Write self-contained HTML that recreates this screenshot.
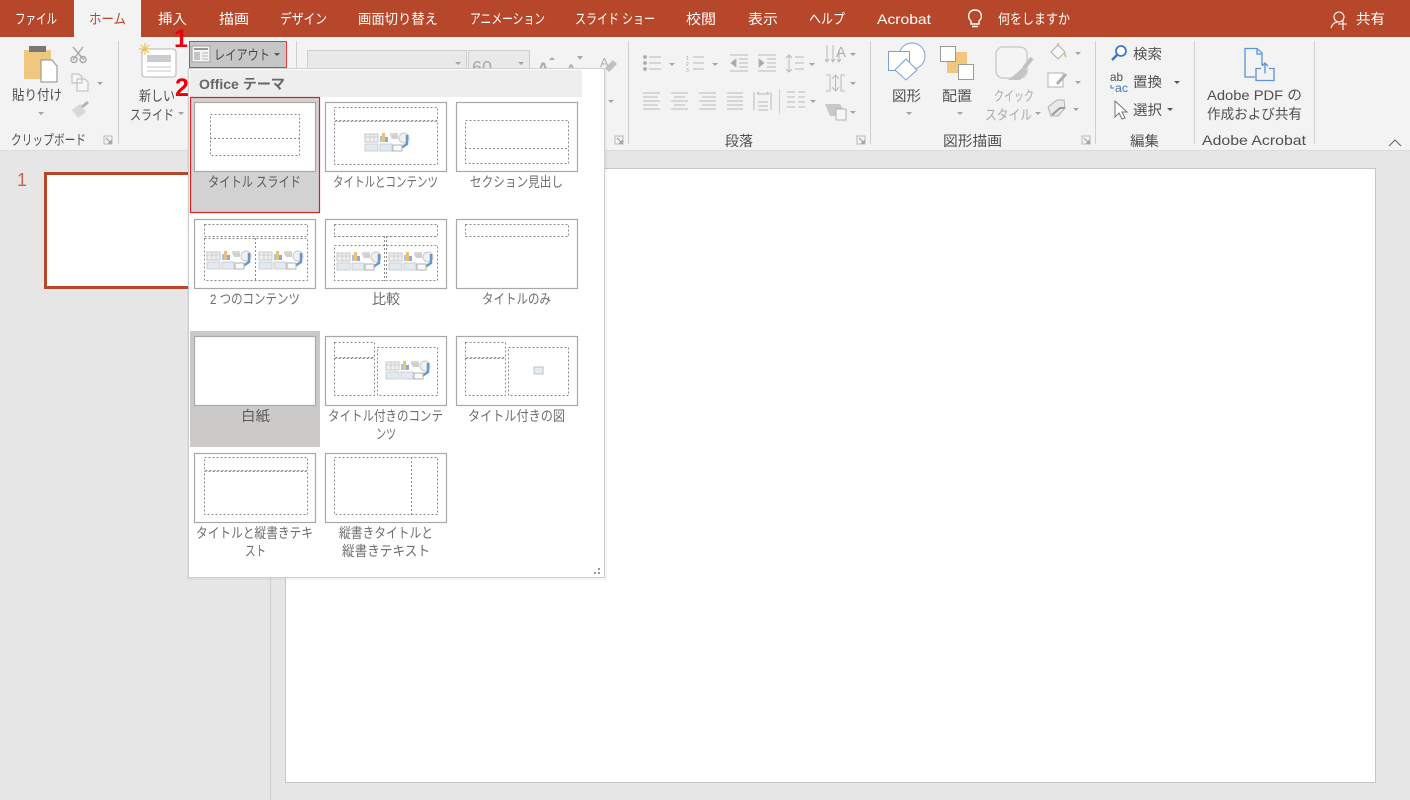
<!DOCTYPE html>
<html lang="ja"><head><meta charset="utf-8"><title>PowerPoint</title>
<style>
html,body{margin:0;padding:0;width:1410px;height:800px;overflow:hidden;background:#e6e6e6}
svg{display:block;position:absolute;left:0;top:0}
text{font-family:"Liberation Sans","Noto Sans CJK JP",sans-serif;font-size:14px;fill:#505050}
.tab text{fill:#fff;font-size:14px}
.lbl text{fill:#6e6e6e;font-size:14px}
.dim text{fill:#ababab}
.ic{fill:none;stroke:#b8b8b8;stroke-width:1}
.ph{fill:none;stroke:#8c8c8c;stroke-width:1;stroke-dasharray:2 2}
.th{fill:#fff;stroke:#a8a8a8;stroke-width:1.200}
.sep{stroke:#d0d0d0;stroke-width:1}
</style></head><body>
<svg width="1410" height="800" viewBox="0 0 1410 800" xmlns="http://www.w3.org/2000/svg">
<defs>
<symbol id="ar" overflow="visible" viewBox="0 0 6 4" width="6" height="4"><path d="M0 0H6L3 3Z" fill="#a4a4a4"/></symbol>
<g id="cl" opacity=".85">
 <rect x="-21" y="-8" width="13" height="8" fill="#eee" stroke="#bebebe"/><path d="M-21 -5H-8M-16 -8V0M-12 -8V0" stroke="#c8c8c8"/>
 <rect x="-6" y="-6" width="2" height="6" fill="#9db7d6"/><rect x="-4" y="-9" width="3" height="9" fill="#e9b463"/><rect x="-1" y="-5" width="3" height="5" fill="#7f9dc0"/>
 <path d="M4 -7H12V-3H6Z" fill="#c8c8c8"/><path d="M4 -8H12" stroke="#a5a5a5"/>
 <circle cx="18" cy="-4" r="5" fill="#eee" stroke="#c0c0c0"/>
 <path d="M21 -7V2L15 6" fill="none" stroke="#4a86c8" stroke-width="2.500"/>
 <rect x="-21" y="2" width="13" height="7" fill="#dce6f0" stroke="#c8c8c8"/><rect x="-6" y="2" width="12" height="7" fill="#dce6f0" stroke="#c8c8c8"/><rect x="7" y="3" width="9" height="6" fill="#f8f8f8" stroke="#a5a5a5"/>
</g>
<g id="launch"><rect x="0" y="0" width="8" height="8" fill="none" stroke="#b8b8b8"/><path d="M2 2L7 7M7 4V7H4" fill="none" stroke="#999"/></g>
</defs>

<!-- Base -->
<rect width="1410" height="800" fill="#e6e6e6"/>
<rect width="1410" height="37" fill="#b7472a"/>
<rect x="0" y="37" width="1410" height="113" fill="#f3f3f3"/>
<rect x="0" y="150" width="1410" height="1" fill="#dcdcdc"/>
<rect x="74" y="0" width="67" height="38" fill="#f3f3f3"/>

<!-- Tabs -->
<g class="tab">
<text x="15" y="24" textLength="42" lengthAdjust="spacingAndGlyphs">ファイル</text>
<text x="89" y="24" textLength="37" lengthAdjust="spacingAndGlyphs" style="fill:#b7472a">ホーム</text>
<text x="158" y="24" textLength="29" lengthAdjust="spacingAndGlyphs">挿入</text>
<text x="219" y="24" textLength="30" lengthAdjust="spacingAndGlyphs">描画</text>
<text x="280" y="24" textLength="47" lengthAdjust="spacingAndGlyphs">デザイン</text>
<text x="358" y="24" textLength="80" lengthAdjust="spacingAndGlyphs">画面切り替え</text>
<text x="470" y="24" textLength="75" lengthAdjust="spacingAndGlyphs">アニメーション</text>
<text x="575" y="24" textLength="80" lengthAdjust="spacingAndGlyphs">スライド ショー</text>
<text x="686" y="24" textLength="30" lengthAdjust="spacingAndGlyphs">校閲</text>
<text x="748" y="24" textLength="30" lengthAdjust="spacingAndGlyphs">表示</text>
<text x="809" y="24" textLength="36" lengthAdjust="spacingAndGlyphs">ヘルプ</text>
<text x="877" y="24" textLength="54" lengthAdjust="spacingAndGlyphs">Acrobat</text>
<text x="998" y="24" textLength="72" lengthAdjust="spacingAndGlyphs">何をしますか</text>
<text x="1356" y="24" textLength="29" lengthAdjust="spacingAndGlyphs">共有</text>
</g>
<!-- Tell me bulb -->
<path d="M971 21C967 18 968 10 975 10C982 10 983 18 979 21V24H971ZM972 26.500H978" fill="none" stroke="#fff" stroke-width="1.400"/>
<!-- Share user -->
<circle cx="1339" cy="17" r="5" fill="none" stroke="#fff" stroke-width="1.100"/>
<path d="M1331 28C1332 24 1335 22 1338 22M1338 24H1347M1343 20V30" fill="none" stroke="#fff" stroke-width="1.100"/>

<!-- Group separators -->
<g class="sep"><path d="M118.500 41V144M296.500 41V144M628.500 41V144M870.500 41V144M1095.500 41V144M1194.500 41V144M1314.500 41V144"/></g>

<!-- Clipboard -->
<path d="M24 50H51V79H24Z" fill="#f0c77e"/>
<rect x="29" y="46" width="17" height="6" fill="#777"/>
<path d="M41 60H52L57 66V82H41Z" fill="#fff" stroke="#8e8e8e"/>
<text x="12" y="100" textLength="50" lengthAdjust="spacingAndGlyphs">貼り付け</text>
<use href="#ar" x="38" y="112"/>
<path d="M73 47L84 60M83 47L73 60" stroke="#a8a8a8" fill="none" stroke-width="1.400"/><circle cx="74" cy="59.500" r="3" fill="none" stroke="#a8a8a8" stroke-width="1.400"/><circle cx="83" cy="59.500" r="3" fill="none" stroke="#a8a8a8" stroke-width="1.400"/>
<path d="M72 74H79L82 77V83H72ZM77 79H85L88 82V91H77Z" fill="#f7f7f7" stroke="#bababa"/>
<use href="#ar" x="97" y="82"/>
<path d="M72 110L80 104L86 112L78 118Z" fill="#d8d8d8"/><path d="M82 107L88 102" stroke="#b4b4b4" stroke-width="3"/>
<text x="11" y="145" textLength="75" lengthAdjust="spacingAndGlyphs">クリップボード</text>
<use href="#launch" x="104" y="136"/>

<!-- New slide -->
<rect x="142" y="49" width="34" height="28" rx="3" fill="#fff" stroke="#b4b4b4"/>
<rect x="147" y="55" width="24" height="7" fill="#cccccc"/><path d="M147 67H171M147 71H171" stroke="#c4c4c4"/>
<path d="M145 43V55M139 49H151M141 45L149 53M149 45L141 53" stroke="#eec05a" stroke-width="1.200"/>
<text x="139" y="101" textLength="36" lengthAdjust="spacingAndGlyphs">新しい</text>
<text x="130" y="120" textLength="44" lengthAdjust="spacingAndGlyphs">スライド</text>
<use href="#ar" x="178" y="112"/>

<!-- Layout button -->
<rect x="189.500" y="41.500" width="97" height="26" fill="#c6c6c6" stroke="#e53a3a"/>
<rect x="192" y="46" width="18" height="16" fill="#f4f4f4" stroke="#a0a0a0"/><path d="M194 49H208" stroke="#999" stroke-width="2"/><rect x="194" y="52" width="6" height="8" fill="#c4c4c4"/><path d="M202 53H208M202 56H208M202 59H208" stroke="#b4b4b4"/>
<text x="214" y="60" textLength="56" lengthAdjust="spacingAndGlyphs" style="fill:#4a4a4a">レイアウト</text>
<path d="M274 53H280L277 56Z" fill="#555"/>

<!-- Font (disabled) -->
<rect x="307.500" y="50.500" width="159" height="30" fill="#e9e9e9" stroke="#cfcfcf"/>
<rect x="468.500" y="50.500" width="61" height="30" fill="#e9e9e9" stroke="#cfcfcf"/>
<use href="#ar" x="455" y="62"/><use href="#ar" x="518" y="62"/>
<text x="472" y="74" style="font-size:18px;fill:#aaa">60</text>
<text x="537" y="74" style="font-size:17px;fill:#aaa;font-weight:bold">A</text>
<text x="566" y="74" style="font-size:14px;fill:#aaa;font-weight:bold">A</text>
<path d="M549 60H555L552 57ZM577 56H583L580 60Z" fill="#aaa"/>
<text x="600" y="67" style="font-size:13px;fill:#b0b0b0">A</text>
<path d="M605 68L613 60L617 64L609 72Z" fill="#c0c0c0"/>
<use href="#ar" x="608" y="100"/>
<use href="#launch" x="615" y="136"/>

<!-- Paragraph -->
<g class="ic">
<circle cx="645" cy="57" r="1.500" fill="#a5a5a5"/><circle cx="645" cy="63" r="1.500" fill="#a5a5a5"/><circle cx="645" cy="69" r="1.500" fill="#a5a5a5"/>
<path d="M649 57H661M649 63H661M649 69H661"/>
<path d="M693 57H704M693 63H704M693 69H704"/>
<path d="M730 55H748M739 59H748M739 63H748M739 67H748M730 71H748"/><path d="M736 59L731 63L736 67Z" fill="#a5a5a5"/>
<path d="M758 55H776M767 59H776M767 63H776M767 67H776M758 71H776"/><path d="M759 59L764 63L759 67Z" fill="#a5a5a5"/>
<path d="M795 57H804M795 63H804M795 69H804M789 55V72M786 58L789 55L792 58M786 69L789 72L792 69"/>
<path d="M827 45V62M833 45V62M839 50V62M825 59L827 62L829 59M831 59L833 62L835 59M837 59L839 62L841 59"/>
<path d="M643 93H660M643 97H658M643 101H660M643 105H658M643 109H660"/>
<path d="M671 93H688M674 97H685M671 101H688M674 105H685M671 109H688"/>
<path d="M699 93H716M702 97H716M699 101H716M702 105H716M699 109H716"/>
<path d="M727 93H743M727 97H743M727 101H743M727 105H743M727 109H743"/>
<path d="M754 92V110M771 92V110M758 102H768M758 106H768M758 110H768M757 94H769M757 94L759 92M769 94L767 92"/>
<path d="M787 92H795M798 92H805M787 97H795M798 97H805M787 102H795M798 102H805M787 107H795M798 107H805"/>
<path d="M826 75H830V91H826M845 75H841V91H845M835.500 76V90M832 79L835.500 75L839 79M832 87L835.500 91L839 87"/>
</g>
<text x="686" y="60" style="font-size:5px;fill:#aaa">1</text><text x="686" y="66" style="font-size:5px;fill:#aaa">2</text><text x="686" y="72" style="font-size:5px;fill:#aaa">3</text>
<text x="836" y="57" style="font-size:15px;fill:#b0b0b0">A</text>
<path d="M825 104H840L843 109L838 116H830Z" fill="#c8c8c8"/><path d="M836 109H846V120H836Z" fill="#f7f7f7" stroke="#b0b0b0"/>
<rect x="779" y="89" width="1" height="25" fill="#d0d0d0"/>
<use href="#ar" x="669" y="63"/><use href="#ar" x="712" y="63"/><use href="#ar" x="809" y="63"/><use href="#ar" x="850" y="53"/><use href="#ar" x="850" y="82"/><use href="#ar" x="810" y="100"/><use href="#ar" x="850" y="111"/>
<text x="725" y="146" textLength="28" lengthAdjust="spacingAndGlyphs">段落</text>
<use href="#launch" x="857" y="136"/>

<!-- Drawing -->
<circle cx="912" cy="56" r="13" fill="#fff" stroke="#7aa0d4"/>
<rect x="888.500" y="51.500" width="21" height="19" fill="#fff" stroke="#7aa0d4"/>
<path d="M895 70L906 59L917 70L906 80Z" fill="#fff" stroke="#7aa0d4"/>
<text x="892" y="101" textLength="29" lengthAdjust="spacingAndGlyphs">図形</text>
<use href="#ar" x="906" y="112"/>
<rect x="947" y="52" width="20" height="21" fill="#f0c77e"/>
<rect x="940.500" y="46.500" width="15" height="15" fill="#fff" stroke="#9a9a9a"/>
<rect x="958.500" y="64.500" width="15" height="15" fill="#fff" stroke="#9a9a9a"/>
<text x="942" y="101" textLength="30" lengthAdjust="spacingAndGlyphs">配置</text>
<use href="#ar" x="957" y="112"/>
<rect x="996" y="47" width="31" height="31" rx="7" fill="#f4f4f4" stroke="#cdcdcd" stroke-width="1.500"/>
<path d="M1032 58L1024 68" stroke="#c0c0c0" stroke-width="4"/><path d="M1024 66L1018 72L1008 80H1020L1027 72Z" fill="#c4c4c4"/>
<g class="dim"><text x="994" y="101" textLength="40" lengthAdjust="spacingAndGlyphs">クイック</text>
<text x="985" y="120" textLength="47" lengthAdjust="spacingAndGlyphs">スタイル</text></g>
<use href="#ar" x="1035" y="112"/>
<path d="M1051 52L1058 45L1065 52L1058 59Z" fill="#f6f6f6" stroke="#b0b0b0"/><path d="M1058 45V43M1064 53L1066 57" stroke="#d9b56d" stroke-width="1.500"/>
<rect x="1048" y="73" width="15" height="14" fill="#fff" stroke="#b0b0b0"/><path d="M1057 84L1066 74" stroke="#b0b0b0" stroke-width="3"/>
<path d="M1048 107L1057 100H1064L1065 108L1058 116H1051Z" fill="#e9e9e9" stroke="#b0b0b0"/><path d="M1052 115L1060 108L1065 108" fill="none" stroke="#999" stroke-width="2"/>
<use href="#ar" x="1075" y="52"/><use href="#ar" x="1075" y="81"/><use href="#ar" x="1073" y="108"/>
<text x="943" y="146" textLength="59" lengthAdjust="spacingAndGlyphs">図形描画</text>
<use href="#launch" x="1082" y="136"/>

<!-- Editing -->
<circle cx="1121" cy="51" r="5" fill="#fff" stroke="#3f78c0" stroke-width="1.800"/><path d="M1117 55L1112 60" stroke="#3f78c0" stroke-width="2.500"/>
<text x="1133" y="59" textLength="29" lengthAdjust="spacingAndGlyphs">検索</text>
<text x="1110" y="81" textLength="13" lengthAdjust="spacingAndGlyphs" style="font-size:12px">ab</text>
<text x="1115" y="92" textLength="13" lengthAdjust="spacingAndGlyphs" style="font-size:12px;fill:#3f78c0">ac</text>
<path d="M1111 85V88H1114" fill="none" stroke="#3f78c0"/>
<text x="1133" y="87" textLength="29" lengthAdjust="spacingAndGlyphs">置換</text>
<path d="M1174 81H1180L1177 84Z" fill="#555"/>
<path d="M1115 101V117L1119 113L1122 119L1125 118L1122 112H1127Z" fill="#fff" stroke="#777"/>
<text x="1133" y="115" textLength="29" lengthAdjust="spacingAndGlyphs">選択</text>
<path d="M1167 108H1173L1170 111Z" fill="#555"/>
<text x="1130" y="146" textLength="29" lengthAdjust="spacingAndGlyphs">編集</text>

<!-- Acrobat -->
<path d="M1262 65V53L1257 48.500H1245V77H1255" fill="none" stroke="#5b93d6" stroke-width="1.300"/>
<path d="M1257 49V54H1262" fill="#e8eef7" stroke="#5b93d6" stroke-width="1.300"/>
<path d="M1261 70H1256V82H1274V70H1269M1265 75V65M1262 67.500L1265 64.500L1268 67.500" fill="none" stroke="#5b93d6" stroke-width="1.300" transform="translate(0 -1.500)"/>
<text x="1207" y="100" textLength="95" lengthAdjust="spacingAndGlyphs">Adobe PDF の</text>
<text x="1207" y="119" textLength="95" lengthAdjust="spacingAndGlyphs">作成および共有</text>
<text x="1202" y="145" textLength="104" lengthAdjust="spacingAndGlyphs">Adobe Acrobat</text>
<path d="M1389 146L1395 140L1401 146" fill="none" stroke="#666" stroke-width="1.100"/>

<!-- Work area -->
<rect x="270" y="151" width="1" height="649" fill="#cfcfcf"/>
<rect x="285.500" y="168.500" width="1090" height="614" fill="#fff" stroke="#c6c6c6"/>
<text x="17" y="186" style="font-size:18px;fill:#c0664e">1</text>
<rect x="45.500" y="173.500" width="160" height="114" fill="#fff" stroke="#b7472a" stroke-width="3"/>

<!-- Dropdown -->
<rect x="187" y="69" width="420" height="511" fill="#000" opacity=".04"/>
<rect x="188.500" y="68.500" width="416" height="509" fill="#fff" stroke="#cecece"/>
<rect x="190" y="70" width="392" height="27" fill="#eeeeee"/>
<text x="199" y="89" textLength="86" lengthAdjust="spacingAndGlyphs" style="fill:#666;font-weight:bold">Office テーマ</text>

<rect x="190" y="97" width="130" height="116" fill="#d2d2d2"/>
<rect x="190.500" y="97.500" width="129" height="115" fill="none" stroke="#d9211f" stroke-width="1.200"/>
<rect x="190" y="331" width="130" height="116" fill="#cbcac8"/>

<g class="th">
<rect x="194.500" y="102.500" width="121" height="69"/><rect x="325.500" y="102.500" width="121" height="69"/><rect x="456.500" y="102.500" width="121" height="69"/>
<rect x="194.500" y="219.500" width="121" height="69"/><rect x="325.500" y="219.500" width="121" height="69"/><rect x="456.500" y="219.500" width="121" height="69"/>
<rect x="194.500" y="336.500" width="121" height="69"/><rect x="325.500" y="336.500" width="121" height="69"/><rect x="456.500" y="336.500" width="121" height="69"/>
<rect x="194.500" y="453.500" width="121" height="69"/><rect x="325.500" y="453.500" width="121" height="69"/>
</g>

<g class="ph">
<rect x="210.500" y="114.500" width="89" height="41"/><path d="M210 138.500H300"/>
<rect x="334.500" y="107.500" width="103" height="13"/><rect x="334.500" y="121.500" width="103" height="43"/>
<rect x="465.500" y="120.500" width="103" height="43"/><path d="M465 148.500H569"/>
<rect x="204.500" y="224.500" width="103" height="12"/><rect x="204.500" y="238.500" width="103" height="42"/><path d="M255.500 238V281"/>
<rect x="334.500" y="224.500" width="103" height="12"/><rect x="334.500" y="245.500" width="103" height="35"/><path d="M384.500 236V281M386.500 236V281M334 236.500H438"/>
<rect x="465.500" y="224.500" width="103" height="12"/>
<rect x="334.500" y="342.500" width="40" height="15"/><rect x="334.500" y="358.500" width="40" height="37"/><rect x="377.500" y="347.500" width="60" height="48"/>
<rect x="465.500" y="342.500" width="40" height="15"/><rect x="465.500" y="358.500" width="40" height="37"/><rect x="508.500" y="347.500" width="60" height="48"/>
<rect x="204.500" y="457.500" width="103" height="13"/><rect x="204.500" y="471.500" width="103" height="43"/>
<rect x="334.500" y="457.500" width="103" height="57"/><path d="M411.500 457V515"/>
</g>

<use href="#cl" x="386" y="142"/>
<use href="#cl" x="228" y="260"/><use href="#cl" x="280" y="260"/>
<use href="#cl" x="358" y="261"/><use href="#cl" x="410" y="261"/>
<use href="#cl" x="407" y="370"/>
<rect x="534" y="367" width="9" height="7" fill="#e4ebf2" stroke="#c0c0c0"/>

<g class="lbl">
<text x="208" y="187" textLength="93" lengthAdjust="spacingAndGlyphs" style="fill:#5a5a5a">タイトル スライド</text>
<text x="333" y="187" textLength="105" lengthAdjust="spacingAndGlyphs">タイトルとコンテンツ</text>
<text x="470" y="187" textLength="93" lengthAdjust="spacingAndGlyphs">セクション見出し</text>
<text x="210" y="304" textLength="90" lengthAdjust="spacingAndGlyphs">2 つのコンテンツ</text>
<text x="372" y="304" textLength="28" lengthAdjust="spacingAndGlyphs">比較</text>
<text x="482" y="304" textLength="69" lengthAdjust="spacingAndGlyphs">タイトルのみ</text>
<text x="241" y="421" textLength="29" lengthAdjust="spacingAndGlyphs" style="fill:#5a5a5a">白紙</text>
<text x="328" y="421" textLength="115" lengthAdjust="spacingAndGlyphs">タイトル付きのコンテ</text>
<text x="376" y="439" textLength="20" lengthAdjust="spacingAndGlyphs">ンツ</text>
<text x="468" y="421" textLength="97" lengthAdjust="spacingAndGlyphs">タイトル付きの図</text>
<text x="196" y="538" textLength="117" lengthAdjust="spacingAndGlyphs">タイトルと縦書きテキ</text>
<text x="245" y="556" textLength="21" lengthAdjust="spacingAndGlyphs">スト</text>
<text x="339" y="538" textLength="94" lengthAdjust="spacingAndGlyphs">縦書きタイトルと</text>
<text x="342" y="556" textLength="88" lengthAdjust="spacingAndGlyphs">縦書きテキスト</text>
</g>
<path d="M598 568h2v2h-2zM594 572h2v2h-2zM598 572h2v2h-2z" fill="#999"/>

<!-- Step numbers -->
<text x="174" y="47" style="font-size:25px;font-weight:bold;fill:#e8000b">1</text>
<text x="175" y="96" style="font-size:25px;font-weight:bold;fill:#e8000b">2</text>
</svg>
</body></html>
